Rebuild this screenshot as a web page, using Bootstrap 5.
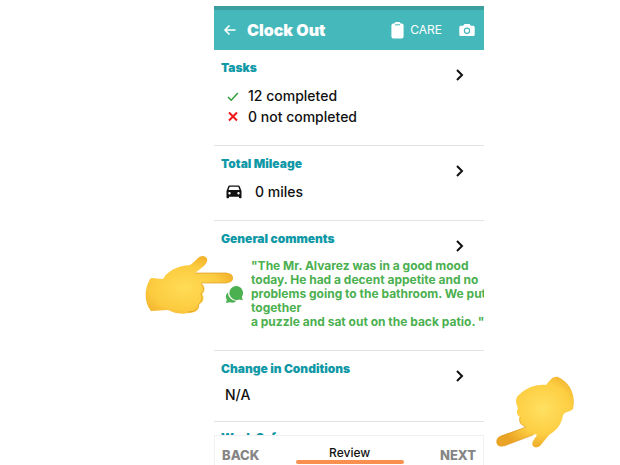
<!DOCTYPE html>
<html lang="en">
<head>
<meta charset="utf-8">
<meta name="viewport" content="width=device-width, initial-scale=1">
<title>Clock Out</title>
<link href="https://cdn.jsdelivr.net/npm/bootstrap@5.3.0/dist/css/bootstrap.min.css" rel="stylesheet">
<style>
body { font-family: Inter, "Liberation Sans", sans-serif; background: #fff; color: #111; }
.stage { display: grid; grid-template-columns: 214fr 270fr 136fr; }
.phone { grid-column: 2; min-width: 0; padding-top: 6px; }
.status-strip { height: 4px; background: #3c9f9f; }
.app-bar { height: 40px; background: #45b8bb; color: #fff; padding: 0 9px 0 9px; }
.app-title { font-size: 16px; font-weight: 900; line-height: 20px; margin-left: 10px; }
.care-btn { font-size: 12px; line-height: 16px; gap: 6px; margin-right: 17px; }
.plain-btn { background: none; border: 0; padding: 0; color: inherit; }
.feed { min-height: 0; overflow-y: clip; overflow-x: visible; }
.entry { padding: 10px 8px 0 7px; border-bottom: 1px solid #e2e2e2; }
.entry h2 { font-size: 12px; line-height: 16px; font-weight: 900; color: #0f98a6; margin: 0; }
.entry .chev { position: absolute; top: 18px; right: 19px; }
.tasks { min-height: 96px; }
.mileage { min-height: 75px; }
.comments { min-height: 130px; }
.conditions { min-height: 71px; }
.work { padding-top: 8px; }
.fact { font-size: 14px; line-height: 21px; font-weight: 500; gap: 8px; }
.tasks .facts { margin-top: 9px; padding-left: 5px; }
.mileage .fact { margin-top: 9px; padding-left: 5px; gap: 13px; }
.conditions .fact { margin: 7px 0 0 4px; }
.comment-row { margin: 12px -8px 0 0; padding-left: 4px; gap: 7px; }
.quote { font-size: 12px; line-height: 14px; font-weight: 700; color: #4bb04f; white-space: nowrap; overflow: hidden; min-width: 0; }
.hand-left { position: absolute; left: -70px; top: 35px; }
.hand-right { position: absolute; left: 9%; bottom: 17px; }
.step-bar { border: 1px solid #f0f0f0; border-bottom: 0; background: #fff; padding: 0 7px; height: 30px; z-index: 2; }
.step-btn { font-size: 13px; line-height: 16px; font-weight: 800; color: #858585; margin-top: 11px; }
.step-now { width: 108px; font-size: 12px; line-height: 15px; font-weight: 500; padding-top: 9px; color: #111; }
.step-now::after { content: ""; display: block; height: 4px; border-radius: 2px; background: #fa9050; }
</style>
<script src="https://cdn.jsdelivr.net/npm/bootstrap@5.3.0/dist/js/bootstrap.bundle.min.js"></script>
</head>
<body>
<div class="stage vh-100 overflow-hidden">
  <div class="phone d-flex flex-column vh-100">
    <div class="status-strip flex-shrink-0"></div>
    <nav class="app-bar d-flex align-items-center flex-shrink-0" aria-label="Top">
      <button class="plain-btn d-flex" aria-label="Go back">
        <svg width="14" height="14" viewBox="0 0 14 14" fill="none" stroke="#fff" stroke-width="1.6"><path d="M12.500 7H2M6.500 2.500 2 7l4.500 4.500"/></svg>
      </button>
      <h1 class="app-title mb-0 me-auto">Clock Out</h1>
      <button class="plain-btn care-btn d-flex align-items-center">
        <svg width="13" height="17" viewBox="0 0 13 17"><rect x=".4" y="1.5" width="12.2" height="15" rx="2" fill="#fff"/><rect x="3.500" y="0" width="6" height="4" rx="1.500" fill="#fff"/><path d="M4 2.800h5" stroke="#45b8bb" stroke-width="1"/></svg>
        CARE
      </button>
      <button class="plain-btn d-flex" aria-label="Camera">
        <svg width="16" height="14" viewBox="0 0 16 14"><path fill="#fff" d="M5.500 1h5l1.400 1.700H14c1 0 1.700.7 1.700 1.700v7c0 1-.7 1.600-1.700 1.600H2c-1 0-1.700-.6-1.700-1.600v-7c0-1 .7-1.700 1.700-1.700h2.100z"/><circle cx="8" cy="7.700" r="2.600" fill="none" stroke="#45b8bb" stroke-width="1.200"/></svg>
      </button>
    </nav>

    <main class="feed flex-grow-1">
      <section class="entry tasks position-relative">
        <h2>Tasks</h2>
        <button class="plain-btn chev d-flex" aria-label="Open tasks"><svg width="10" height="14" viewBox="0 0 10 14" fill="none" stroke="#111" stroke-width="2"><path d="M2 2l5 5-5 5"/></svg></button>
        <div class="facts">
          <div class="fact d-flex align-items-center"><svg width="14" height="14" viewBox="0 0 14 14" fill="none" stroke="#2c9b35" stroke-width="1.400"><path d="M2 8l3.200 3.200L11.800 4"/></svg><span>12 completed</span></div>
          <div class="fact d-flex align-items-center"><svg width="14" height="14" viewBox="0 0 14 14" fill="none" stroke="#f01818" stroke-width="2"><path d="M3 2.500l8 8M11 2.500l-8 8"/></svg><span>0 not completed</span></div>
        </div>
      </section>

      <section class="entry mileage position-relative">
        <h2>Total Mileage</h2>
        <button class="plain-btn chev d-flex" aria-label="Open mileage"><svg width="10" height="14" viewBox="0 0 10 14" fill="none" stroke="#111" stroke-width="2"><path d="M2 2l5 5-5 5"/></svg></button>
        <div class="fact d-flex align-items-center">
          <svg width="16" height="14" viewBox="0 0 16 14"><path fill="#111" fill-rule="evenodd" d="M3.500.5h9c.6 0 1 .3 1.200.8L15.500 6v6.500c0 .5-.3.800-.8.800h-.9c-.5 0-.8-.3-.8-.8v-.8H3v.8c0 .5-.3.800-.8.800h-.9c-.5 0-.8-.3-.8-.8V6l1.800-4.700c.2-.5.600-.8 1.200-.8zM3.700 1.700 2.500 5h11l-1.200-3.300zM3.500 7a1.200 1.200 0 1 0 0 2.400 1.200 1.200 0 0 0 0-2.400zm9 0a1.200 1.200 0 1 0 0 2.400 1.200 1.200 0 0 0 0-2.400z"/></svg>
          <span>0 miles</span>
        </div>
      </section>

      <section class="entry comments position-relative">
        <h2>General comments</h2>
        <button class="plain-btn chev d-flex" aria-label="Open comments"><svg width="10" height="14" viewBox="0 0 10 14" fill="none" stroke="#111" stroke-width="2"><path d="M2 2l5 5-5 5"/></svg></button>
        <div class="comment-row d-flex align-items-center">
          <svg class="flex-shrink-0" width="19" height="19" viewBox="0 0 19 19" fill="#4bb04f"><path d="M11 1a7 7 0 0 1 5.800 10.900l1 3.300-3.600-.8A7 7 0 1 1 11 1z"/><path d="M3 7.500a8 8 0 0 0 8.500 8.200A6 6 0 0 1 5 17.200l-4 .8.800-3.500C.2 12 .9 9 3 7.500z"/></svg>
          <div class="quote">"The Mr. Alvarez was in a good mood<br>today. He had a decent appetite and no<br>problems going to the bathroom. We put<br>together<br>a puzzle and sat out on the back patio. "</div>
        </div>
        <svg class="hand-left" width="90" height="62" viewBox="0 0 90 62" aria-hidden="true">
          <defs>
            <radialGradient id="skinA" cx=".45" cy=".55" r=".65"><stop offset="0" stop-color="#ffdc55"/><stop offset=".6" stop-color="#fccb3f"/><stop offset="1" stop-color="#eda624"/></radialGradient>
          </defs>
          <path fill="url(#skinA)" d="M6 23C8 21 12 23 19 23 24 14 34 10 46 9 52 5 54 0 59 0 64 1 65 5 60 10L51 17H83C91 17 91 27 83 27H57C62 30 61 36 58 38 61 42 59 47 55 48 56 54 51 57 44 57 36 59 28 56 24 54L7 55C0 47 0 33 6 23Z"/>
          <path fill="none" stroke="#dd9524" stroke-width="1" opacity=".65" d="M51 17H83M57 27H83M57 28q5 5 0 10 3 5-2 10-1 8-11 8"/>
        </svg>
      </section>

      <section class="entry conditions position-relative">
        <h2>Change in Conditions</h2>
        <button class="plain-btn chev d-flex" aria-label="Open conditions"><svg width="10" height="14" viewBox="0 0 10 14" fill="none" stroke="#111" stroke-width="2"><path d="M2 2l5 5-5 5"/></svg></button>
        <div class="fact">N/A</div>
      </section>

      <section class="entry work"><h2>Work Safe</h2></section>
    </main>

    <footer class="step-bar d-flex align-items-start justify-content-between flex-shrink-0">
      <button class="plain-btn step-btn">BACK</button>
      <div class="step-now text-center">Review</div>
      <button class="plain-btn step-btn">NEXT</button>
    </footer>
  </div>
  <aside class="position-relative">
    <svg class="hand-right" width="80" height="74" viewBox="0 0 80 74" aria-hidden="true">
      <defs><radialGradient id="skinB" cx=".6" cy=".45" r=".6"><stop offset="0" stop-color="#ffe062"/><stop offset=".6" stop-color="#fdce42"/><stop offset="1" stop-color="#eaa425"/></radialGradient></defs>
      <path fill="url(#skinB)" d="M62 3C56 2 54 7 50 11 40 10 30 14 24 20 18 24 20 30 22 34 20 38 21 42 24 43 22 48 25 51 30 53L4 62C-3 66 1 75 8 72L37 61C41 59 42 61 39 64 33 71 38 76 44 72L53 61C60 57 66 50 67 41 70 37 74 38 77 35 80 22 75 9 62 3Z"/>
      <path fill="none" stroke="#dd9524" stroke-width="1" opacity=".6" d="M24 43q-2 7 6 10L6 62M37 61 8 72"/>
    </svg>
  </aside>
</div>
</body>
</html>
